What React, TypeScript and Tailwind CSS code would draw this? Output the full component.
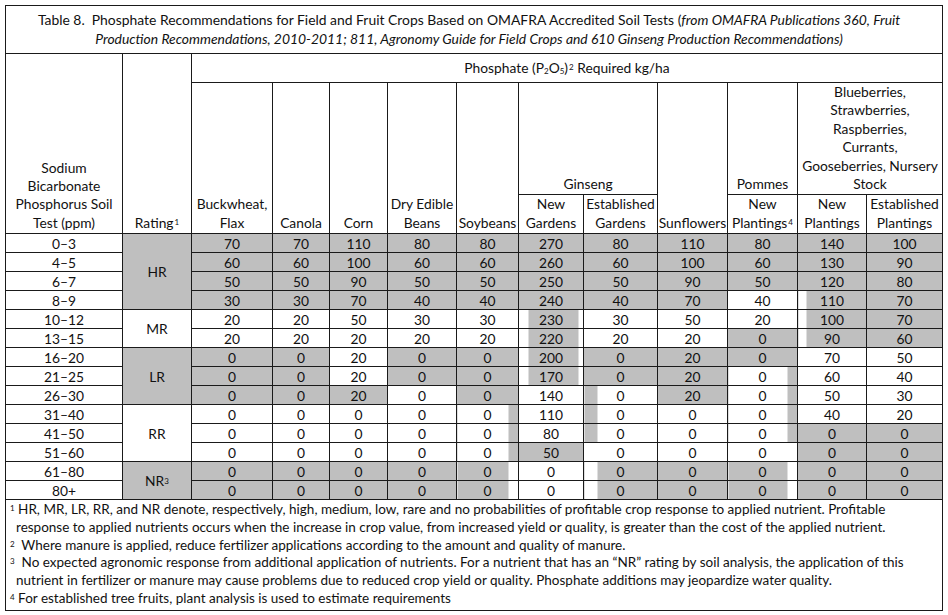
const G = 'bg-[#bfbfbf]'

const shade: Record<string, string> = {
  g: 'bg-[#bfbfbf]',
  w: 'bg-white',
  in: 'bg-[linear-gradient(to_right,#fff_9px,#bfbfbf_9px,#bfbfbf_calc(100%_-_5px),#fff_calc(100%_-_5px))]',
  wl8: 'bg-[linear-gradient(to_right,#fff_8px,#bfbfbf_8px)]',
  gl13: 'bg-[linear-gradient(to_right,#bfbfbf_13px,#fff_13px)]',
  wl13: 'bg-[linear-gradient(to_right,#fff_13px,#bfbfbf_13px)]',
  gr10: 'bg-[linear-gradient(to_left,#bfbfbf_10px,#fff_10px)]',
  wr10: 'bg-[linear-gradient(to_left,#fff_10px,#bfbfbf_10px)]',
}

const allG = ['g', 'g', 'g', 'g', 'g', 'g', 'g', 'g', 'g', 'g', 'g']
const nr = ['g', 'g', 'g', 'g', 'wr10', 'w', 'wl13', 'g', 'wr10', 'g', 'g']

const rows: { test: string; vals: number[]; fill: string[] }[] = [
  { test: '0–3', vals: [70, 70, 110, 80, 80, 270, 80, 110, 80, 140, 100], fill: allG },
  { test: '4–5', vals: [60, 60, 100, 60, 60, 260, 60, 100, 60, 130, 90], fill: allG },
  { test: '6–7', vals: [50, 50, 90, 50, 50, 250, 50, 90, 50, 120, 80], fill: allG },
  { test: '8–9', vals: [30, 30, 70, 40, 40, 240, 40, 70, 40, 110, 70], fill: ['g', 'g', 'g', 'g', 'g', 'g', 'g', 'g', 'w', 'wl8', 'g'] },
  { test: '10–12', vals: [20, 20, 50, 30, 30, 230, 30, 50, 20, 100, 70], fill: ['w', 'w', 'w', 'w', 'w', 'in', 'w', 'w', 'w', 'wl8', 'g'] },
  { test: '13–15', vals: [20, 20, 20, 20, 20, 220, 20, 20, 0, 90, 60], fill: ['w', 'w', 'w', 'w', 'w', 'in', 'w', 'w', 'g', 'wl8', 'g'] },
  { test: '16–20', vals: [0, 0, 20, 0, 0, 200, 0, 20, 0, 70, 50], fill: ['g', 'g', 'w', 'g', 'g', 'in', 'g', 'g', 'g', 'w', 'w'] },
  { test: '21–25', vals: [0, 0, 20, 0, 0, 170, 0, 20, 0, 60, 40], fill: ['g', 'g', 'w', 'g', 'g', 'in', 'g', 'g', 'gr10', 'w', 'w'] },
  { test: '26–30', vals: [0, 0, 20, 0, 0, 140, 0, 20, 0, 50, 30], fill: ['g', 'g', 'g', 'w', 'g', 'w', 'gl13', 'g', 'gr10', 'w', 'w'] },
  { test: '31–40', vals: [0, 0, 0, 0, 0, 110, 0, 0, 0, 40, 20], fill: ['w', 'w', 'w', 'w', 'gr10', 'w', 'gl13', 'w', 'gr10', 'w', 'w'] },
  { test: '41–50', vals: [0, 0, 0, 0, 0, 80, 0, 0, 0, 0, 0], fill: ['w', 'w', 'w', 'w', 'gr10', 'w', 'gl13', 'w', 'gr10', 'g', 'g'] },
  { test: '51–60', vals: [0, 0, 0, 0, 0, 50, 0, 0, 0, 0, 0], fill: ['w', 'w', 'w', 'w', 'gr10', 'g', 'w', 'w', 'w', 'g', 'g'] },
  { test: '61–80', vals: [0, 0, 0, 0, 0, 0, 0, 0, 0, 0, 0], fill: nr },
  { test: '80+', vals: [0, 0, 0, 0, 0, 0, 0, 0, 0, 0, 0], fill: nr },
]

// rating cells keyed by the row they start on
const ratings: Record<number, { label: React.ReactNode; span: number; gray: boolean }> = {
  0: { label: 'HR', span: 4, gray: true },
  4: { label: 'MR', span: 2, gray: false },
  6: { label: 'LR', span: 3, gray: true },
  9: { label: 'RR', span: 3, gray: false },
  12: { label: <>NR<sup className="text-[8px] relative -top-[2px]">3</sup></>, span: 2, gray: true },
}

const widths = [117, 69, 81, 57, 58, 69, 62, 65, 74, 70, 70, 69, 76]

const cell = 'border border-[#1a1a1a] p-0'
const head = 'border border-[#1a1a1a] px-0 pb-[1px] align-bottom text-center leading-[18.4px] whitespace-nowrap'

function Sup({ n }: { n: string }) {
  return <sup className="text-[8px] relative -top-[3px] ml-[1px]">{n}</sup>
}

export default function App() {
  return (
    <div className="bg-white w-[948px] h-[615px] pt-[5px] pl-[5px] font-['Lato',sans-serif] text-[13.8px] text-[#111]">
      <table className="table-fixed border-collapse w-[938px]">
        <colgroup>
          {widths.map((w, i) => (
            <col key={i} style={{ width: w }} />
          ))}
        </colgroup>
        <thead>
          <tr className="h-[48px]">
            <td colSpan={13} className="border border-[#1a1a1a] text-center leading-[19px] text-[13.9px] pb-[2px] pr-[10px]">
              Table 8.&nbsp; Phosphate Recommendations for Field and Fruit Crops Based on OMAFRA Accredited Soil Tests (
              <i>from OMAFRA Publications 360, Fruit</i>
              <br />
              <i>Production Recommendations, 2010-2011; 811, Agronomy Guide for Field Crops and 610 Ginseng Production Recommendations)</i>
            </td>
          </tr>
          <tr className="h-[29px]">
            <td rowSpan={3} className={head}>
              Sodium
              <br />
              Bicarbonate
              <br />
              Phosphorus Soil
              <br />
              Test (ppm)
            </td>
            <td rowSpan={3} className={head}>
              Rating<Sup n="1" />
            </td>
            <td colSpan={11} className="border border-[#1a1a1a] text-center align-middle">
              Phosphate (P<sub className="text-[8px] relative top-[1px]">2</sub>O<sub className="text-[8px] relative top-[1px]">5</sub>)
              <Sup n="2" /> Required kg/ha
            </td>
          </tr>
          <tr className="h-[111px]">
            <td rowSpan={2} className={head}>
              Buckwheat,
              <br />
              Flax
            </td>
            <td rowSpan={2} className={head}>
              Canola
            </td>
            <td rowSpan={2} className={head}>
              Corn
            </td>
            <td rowSpan={2} className={head}>
              Dry Edible
              <br />
              Beans
            </td>
            <td rowSpan={2} className={head}>
              Soybeans
            </td>
            <td colSpan={2} className={head}>
              Ginseng
            </td>
            <td rowSpan={2} className={head}>
              Sunflowers
            </td>
            <td className={head}>Pommes</td>
            <td colSpan={2} className={head}>
              Blueberries,
              <br />
              Strawberries,
              <br />
              Raspberries,
              <br />
              Currants,
              <br />
              Gooseberries, Nursery
              <br />
              Stock
            </td>
          </tr>
          <tr className="h-[37px]">
            <td className={head}>
              New
              <br />
              Gardens
            </td>
            <td className={head}>
              Established
              <br />
              Gardens
            </td>
            <td className={head}>
              New
              <br />
              Plantings<Sup n="4" />
            </td>
            <td className={head}>
              New
              <br />
              Plantings
            </td>
            <td className={head}>
              Established
              <br />
              Plantings
            </td>
          </tr>
        </thead>
        <tbody className="text-center">
          {rows.map((r, i) => (
            <tr key={r.test} className="h-[19px] leading-[17px]">
              <td className={`${cell} bg-white`}>{r.test}</td>
              {ratings[i] && (
                <td rowSpan={ratings[i].span} className={`${cell} ${ratings[i].gray ? G : 'bg-white'}`}>
                  {ratings[i].label}
                </td>
              )}
              {r.vals.map((v, j) => (
                <td key={j} className={`${cell} ${shade[r.fill[j]]}`}>
                  {v}
                </td>
              ))}
            </tr>
          ))}
          <tr>
            <td colSpan={13} className="border border-[#1a1a1a] text-left pl-[3px] pt-[1px] pb-[3px] leading-[17.7px] text-[13.5px] whitespace-nowrap">
              <div>
                <Sup n="1" /> HR, MR, LR, RR, and NR denote, respectively, high, medium, low, rare and no probabilities of profitable crop response to applied nutrient. Profitable
              </div>
              <div className="pl-[7px]">
                response to applied nutrients occurs when the increase in crop value, from increased yield or quality, is greater than the cost of the applied nutrient.
              </div>
              <div>
                <Sup n="2" />&nbsp; Where manure is applied, reduce fertilizer applications according to the amount and quality of manure.
              </div>
              <div>
                <Sup n="3" />&nbsp; No expected agronomic response from additional application of nutrients. For a nutrient that has an “NR” rating by soil analysis, the application of this
              </div>
              <div className="pl-[7px]">
                nutrient in fertilizer or manure may cause problems due to reduced crop yield or quality. Phosphate additions may jeopardize water quality.
              </div>
              <div>
                <Sup n="4" /> For established tree fruits, plant analysis is used to estimate requirements
              </div>
            </td>
          </tr>
        </tbody>
      </table>
    </div>
  )
}
